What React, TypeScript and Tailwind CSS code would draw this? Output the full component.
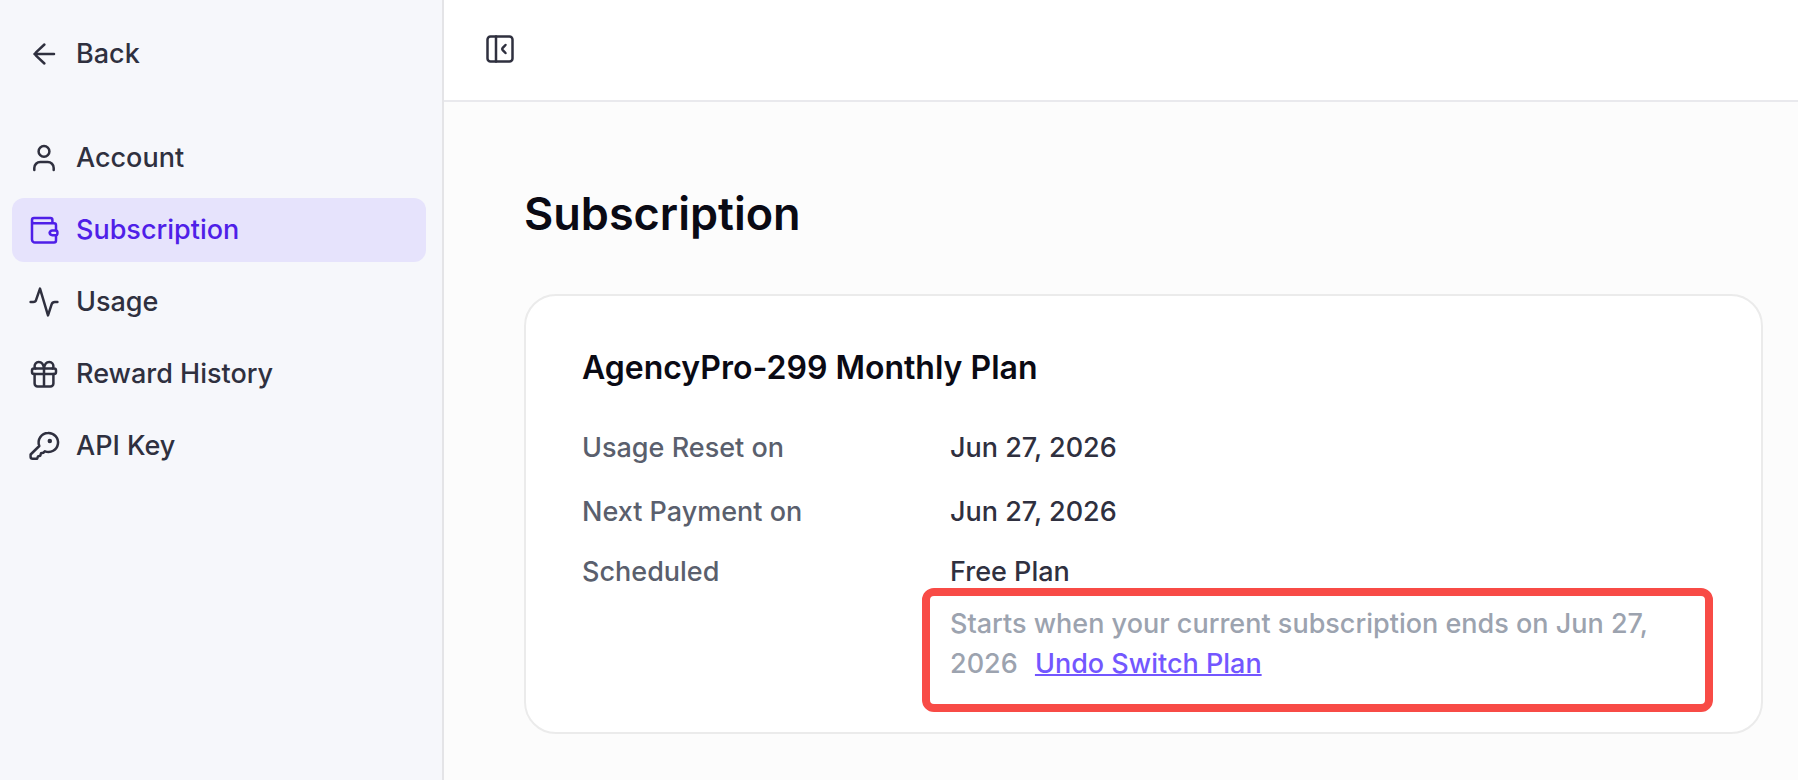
import { ReactNode } from "react";
import { clsx } from "clsx";

type IconProps = { children: ReactNode; className?: string };
const Icon = ({ children, className }: IconProps) => (
  <svg
    viewBox="0 0 32 32"
    fill="none"
    stroke="currentColor"
    strokeWidth={2.5}
    strokeLinecap="round"
    strokeLinejoin="round"
    aria-hidden="true"
    className={clsx("size-8 shrink-0", className)}
  >
    {children}
  </svg>
);

const BackIcon = () => (
  <Icon>
    <path d="M26 16H6.5M16.4 6.5 8 14.3c-1.2 1.1-1.2 2.300 0 3.400l8.400 7.800" />
  </Icon>
);

const UserIcon = () => (
  <Icon>
    <circle cx="16" cy="9.400" r="5.400" />
    <path d="M6.300 28v-2a6 6 0 0 1 6-6h7.400a6 6 0 0 1 6 6v2" />
  </Icon>
);

const WalletIcon = () => (
  <Icon>
    <path d="M24.400 9.300V6a2 2 0 0 0-2-2H6a2 2 0 0 0-2 2v19.400a3 3 0 0 0 3 3h19a2 2 0 0 0 2-2V21.500M4 7.300a2 2 0 0 0 2 2h20a2 2 0 0 1 2 2v5" />
    <path d="M24.300 16.400h3.300a1.800 1.800 0 0 1 1.800 1.800v1.200a1.800 1.800 0 0 1-1.800 1.800h-3.300a3 3 0 0 1-2.700-2.400 3 3 0 0 1 2.700-2.400Z" />
  </Icon>
);

const UsageIcon = () => (
  <Icon>
    <path d="M2.600 16h2.600c1.600 0 2.600-.8 3-2.300L12 2.600l8 26.800 3.600-11c.5-1.600 1.600-2.400 3.200-2.400h2.600" />
  </Icon>
);

const GiftIcon = () => (
  <Icon>
    <rect x="4" y="10.500" width="24" height="5.500" rx="2" />
    <path d="M6.600 16v9.500a3 3 0 0 0 3 3h12.800a3 3 0 0 0 3-3V16M16 10.500v18M16 10.500C15.500 6 13.500 4 10.700 4 7.800 4 6.600 6.500 6.600 8.200c0 1 .3 1.800.8 2.300M16 10.500C16.500 6 18.500 4 21.300 4c2.900 0 4.100 2.500 4.100 4.200 0 1-.3 1.800-.8 2.300" />
  </Icon>
);

const KeyIcon = () => (
  <Icon>
    <path d="M20 3a9.500 9.500 0 1 1-3 18.300l-1.700 1.500-2.300.4-.7 2.600-2.300.6-.9 2.300H4.600a2 2 0 0 1-2-2v-2.200L11.300 16A9.500 9.500 0 0 1 20 3Z" />
    <circle cx="21.800" cy="11" r="1" fill="currentColor" />
  </Icon>
);

const CollapseIcon = () => (
  <Icon>
    <rect x="3.500" y="3.500" width="25" height="25" rx="3" />
    <path d="M12 3.500v25M21.500 12l-3 3.200a1.300 1.300 0 0 0 0 1.600l3 3.200" />
  </Icon>
);

const NAV_ITEMS = [
  { label: "Account", href: "#account", icon: <UserIcon /> },
  { label: "Subscription", href: "#subscription", icon: <WalletIcon /> },
  { label: "Usage", href: "#usage", icon: <UsageIcon /> },
  { label: "Reward History", href: "#reward-history", icon: <GiftIcon /> },
  { label: "API Key", href: "#api-key", icon: <KeyIcon /> },
];

type NavLinkProps = {
  href: string;
  icon: ReactNode;
  children: ReactNode;
  active?: boolean;
};
const NavLink = ({ href, icon, children, active }: NavLinkProps) => (
  <a
    href={href}
    aria-current={active ? "page" : undefined}
    className={clsx(
      "flex h-16 items-center gap-4 rounded-xl px-4",
      active && "bg-[#e6e3fc] text-[#4f1fe8]"
    )}
  >
    {icon}
    {children}
  </a>
);

const Sidebar = () => (
  <aside className="w-111 shrink-0 border-r-2 border-[#e4e4e7] bg-[#f6f7fb] pt-[22px] pr-4 pl-3">
    <NavLink href="#back" icon={<BackIcon />}>
      Back
    </NavLink>
    <nav className="mt-10 flex flex-col gap-2">
      {NAV_ITEMS.map(({ label, href, icon }) => (
        <NavLink
          key={href}
          href={href}
          icon={icon}
          active={label === "Subscription"}
        >
          {label}
        </NavLink>
      ))}
    </nav>
  </aside>
);

const PlanCard = () => (
  <section className="mt-12 rounded-4xl border-2 border-[#ebebeb] bg-white px-14 py-12">
    <h2 className="text-[32px] leading-12 font-semibold text-[#0a0a14]">
      AgencyPro-299 Monthly Plan
    </h2>
    <dl className="mt-9 grid grid-cols-[368px_1fr] leading-10">
      <dt className="mb-6 text-[#5a5f6d]">Usage Reset on</dt>
      <dd>Jun 27, 2026</dd>
      <dt className="mb-5 text-[#5a5f6d]">Next Payment on</dt>
      <dd>Jun 27, 2026</dd>
      <dt className="text-[#5a5f6d]">Scheduled</dt>
      <dd className="relative">
        Free Plan
        <p className="mt-3 text-[#9ca3af]">
          Starts when your current subscription ends on Jun 27, 2026{" "}
          <a
            href="#undo"
            className="ml-2.5 text-[#7357ff] underline decoration-2"
          >
            Undo Switch Plan
          </a>
        </p>
        <div className="pointer-events-none absolute top-9 -right-2 -bottom-7 -left-7 rounded-xl border-8 border-[#f84b46]" />
      </dd>
    </dl>
  </section>
);

export default function App() {
  return (
    <div className="flex min-h-screen bg-[#fcfcfc] font-['Inter',sans-serif] text-[27px] font-medium text-[#2f303f]">
      <Sidebar />
      <div className="min-w-0 flex-1">
        <header className="flex h-[102px] items-center border-b-2 border-[#e9e9ed] bg-white px-10 pb-0.5">
          <button type="button" aria-label="Collapse sidebar">
            <CollapseIcon />
          </button>
        </header>
        <main className="pt-20 pr-[35px] pl-20">
          <h1 className="text-[45px] leading-16 font-semibold text-[#0a0a14]">
            Subscription
          </h1>
          <PlanCard />
        </main>
      </div>
    </div>
  );
}
